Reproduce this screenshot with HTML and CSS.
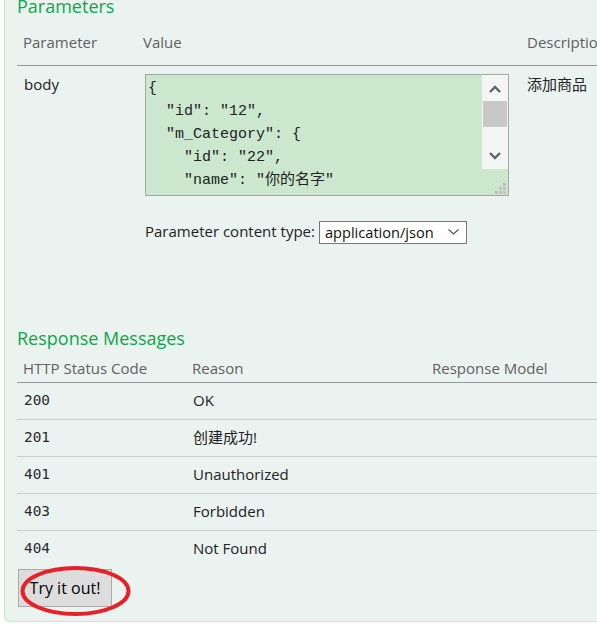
FILE: index.html
```html
<!DOCTYPE html>
<html>
<head>
<meta charset="utf-8">
<title>Swagger operation</title>
<link rel="stylesheet" href="styles.css">
</head>
<body>
<div class="page">
  <div class="content">
    <h4 class="sec-title">Parameters</h4>
    <div class="ptable">
      <div class="prow phead">
        <div>Parameter</div>
        <div>Value</div>
        <div>Description</div>
      </div>
      <div class="prow pbody">
        <div class="pname">body</div>
        <div class="pvalue">
          <div class="textarea">
<pre class="ta-text">{
  "id": "12",
  "m_Category": {
    "id": "22",
    "name": "你的名字"
  },
  "name": "商品",
  "price": 0
}</pre>
            <div class="ta-scroll">
              <div class="sb-btn sb-up">
                <svg width="12" height="8" viewBox="0 0 12 8"><polyline points="1,7 6,2 11,7" fill="none" stroke="#606070" stroke-width="2.4"/></svg>
              </div>
              <div class="sb-thumb"></div>
              <div class="sb-track"></div>
              <div class="sb-btn sb-down">
                <svg width="12" height="8" viewBox="0 0 12 8"><polyline points="1,1 6,6 11,1" fill="none" stroke="#606070" stroke-width="2.4"/></svg>
              </div>
            </div>
            <svg class="grip" width="11" height="11" viewBox="0 0 11 11">
              <rect x="8" y="0" width="3" height="3" fill="#c0c0c0"/>
              <rect x="4" y="4" width="3" height="3" fill="#c0c0c0"/>
              <rect x="8" y="4" width="3" height="3" fill="#c0c0c0"/>
              <rect x="0" y="8" width="3" height="3" fill="#c0c0c0"/>
              <rect x="4" y="8" width="3" height="3" fill="#c0c0c0"/>
              <rect x="8" y="8" width="3" height="3" fill="#c0c0c0"/>
            </svg>
          </div>
          <div class="ctype">
            <span class="ctype-label">Parameter content type:</span>
            <div class="select">
              <span>application/json</span>
              <svg class="sel-chev" width="11" height="6" viewBox="0 0 11 6"><polyline points="0.5,0.5 5.5,5 10.5,0.5" fill="none" stroke="#555" stroke-width="1.2"/></svg>
            </div>
          </div>
        </div>
        <div class="pdesc">添加商品</div>
      </div>
    </div>

    <h4 class="sec-title resp-title">Response Messages</h4>
    <div class="rtable">
      <div class="rrow rhead">
        <div>HTTP Status Code</div>
        <div>Reason</div>
        <div>Response Model</div>
      </div>
      <div class="rrow ritem"><div class="code">200</div><div class="reason">OK</div><div></div></div>
      <div class="rrow ritem"><div class="code">201</div><div class="reason">创建成功!</div><div></div></div>
      <div class="rrow ritem"><div class="code">401</div><div class="reason">Unauthorized</div><div></div></div>
      <div class="rrow ritem"><div class="code">403</div><div class="reason">Forbidden</div><div></div></div>
      <div class="rrow ritem"><div class="code">404</div><div class="reason">Not Found</div><div></div></div>
    </div>

    <div class="try-wrap">
      <button class="try">Try it out!</button>
      <svg class="mark" width="118" height="56" viewBox="0 0 118 56"><ellipse cx="57.5" cy="27" rx="53" ry="23" fill="none" stroke="#e8202a" stroke-width="4"/></svg>
    </div>
  </div>
</div>
</body>
</html>
```

FILE: styles.css
```css
html, body {
  margin: 0;
  padding: 0;
  background: #ffffff;
}

body {
  font-family: "Open Sans", "Noto Sans CJK SC", sans-serif;
  font-size: 15px;
  color: #222222;
  overflow: hidden;
}

.page {
  padding-left: 4px;
  height: 624px;
  overflow: hidden;
}

.content {
  width: 700px;
  margin-top: -6px;
  background: #ebf3f0;
  border: 1px solid #c3e8d1;
  border-top: none;
  border-radius: 0 0 6px 6px;
  padding: 0 0 14px 12px;
}

.sec-title {
  margin: 0;
  font-size: 18px;
  line-height: 24px;
  font-weight: 400;
  color: #10a54a;
}

.resp-title {
  margin-top: 82px;
}

/* Parameters table */
.prow {
  display: grid;
  grid-template-columns: 120px 384px 1fr;
  line-height: 20px;
}

.prow > div {
  padding-left: 6px;
}

.phead {
  color: #5f5f5f;
  padding: 14px 0 13px;
  border-bottom: 1px solid #999999;
}

.pbody {
  padding-top: 8px;
}

.prow > .pname {
  padding-left: 7px;
  color: #222222;
}

.pdesc {
  color: #222222;
}

.textarea {
  position: relative;
  box-sizing: border-box;
  margin-left: 2px;
  width: 364px;
  height: 122px;
  border: 1px solid #a6a6a6;
  background: #cbe8cf;
  display: flex;
  overflow: hidden;
}

.ta-text {
  flex: 1;
  margin: 0;
  padding: 2px 0 0 2px;
  font-family: "Liberation Mono", "Noto Sans CJK SC", monospace;
  font-size: 15px;
  line-height: 23px;
  color: #222222;
  white-space: pre;
  overflow: hidden;
}

.ta-scroll {
  width: 26px;
  height: 94px;
  flex: none;
  background: #f4f6f4;
  display: flex;
  flex-direction: column;
}

.sb-btn {
  height: 26px;
  display: flex;
  align-items: center;
  justify-content: center;
}

.sb-up {
  padding-top: 2px;
  height: 24px;
}

.sb-thumb {
  height: 26px;
  margin: 0 1px;
  background: #c8c8c8;
}

.sb-track {
  flex: 1;
}

.grip {
  position: absolute;
  right: 2px;
  bottom: 1px;
}

.ctype {
  display: flex;
  align-items: flex-start;
  gap: 4px;
  margin: 25px 0 0 2px;
}

.ctype-label {
  line-height: 20px;
  color: #222222;
}

.select {
  box-sizing: border-box;
  width: 148px;
  height: 23px;
  border: 1px solid #767676;
  background: #ffffff;
  padding: 0 7px 0 5px;
  font-size: 14.6px;
  line-height: 20px;
  color: #111111;
  display: flex;
  justify-content: space-between;
  align-items: flex-start;
}

.sel-chev {
  margin-top: 7px;
}

/* Response table */
.rrow {
  display: grid;
  grid-template-columns: 169px 240px 1fr;
  line-height: 20px;
}

.rrow > div {
  padding-left: 6px;
}

.rhead {
  color: #5f5f5f;
  padding: 8px 0 4px;
  border-bottom: 1px solid #999999;
}

.ritem {
  padding: 7px 0 9px;
  border-bottom: 1px solid #cccccc;
}

.ritem:last-child {
  border-bottom: none;
}

.rrow > .code {
  padding-left: 7px;
  font-family: "DejaVu Sans Mono", monospace;
  font-size: 14.4px;
  color: #2a2a2a;
}

.rrow > .reason {
  padding-left: 7px;
  color: #222222;
}

/* Try it out */
.try-wrap {
  position: relative;
  margin: 2px 0 0 1px;
  height: 38px;
}

.try {
  box-sizing: border-box;
  width: 94px;
  height: 38px;
  margin: 0;
  padding: 0;
  background: #dddddd;
  border: 1px solid #aaaaaa;
  border-radius: 0;
  font-family: "Open Sans", sans-serif;
  font-size: 16px;
  color: #000000;
}

.mark {
  position: absolute;
  left: 0;
  top: -5px;
  pointer-events: none;
}
```
